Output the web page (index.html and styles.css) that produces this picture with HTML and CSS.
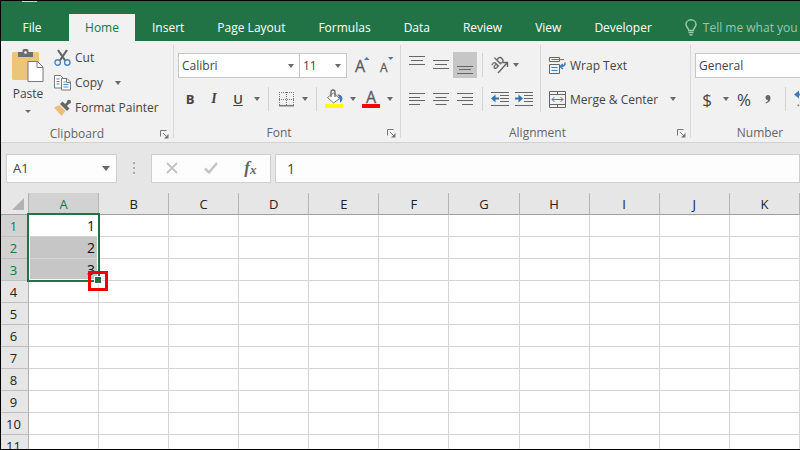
FILE: index.html
```html
<!DOCTYPE html>
<html lang="en">
<head>
<meta charset="utf-8">
<title>Spreadsheet</title>
<link rel="stylesheet" href="styles.css">
</head>
<body>
<div class="app">
  <header class="titlebar">
    <nav class="tabs">
      <button class="tab tab-file">File</button>
      <button class="tab tab-active">Home</button>
      <button class="tab">Insert</button>
      <button class="tab">Page Layout</button>
      <button class="tab">Formulas</button>
      <button class="tab">Data</button>
      <button class="tab">Review</button>
      <button class="tab">View</button>
      <button class="tab">Developer</button>
      <button class="tab tell-me">
        <svg width="12" height="17" viewBox="0 0 12 17" fill="none" stroke="#9cc5ad" stroke-width="1.5"><path d="M3.7 11.5C3.7 9 1 8.500 1 5.500a5 4.700 0 0 1 10 0C11 8.500 8.300 9 8.300 11.500z"/><path d="M3.500 13.500h5M4.500 15.700h3"/></svg>
        <span>Tell me what you want to do</span>
      </button>
    </nav>
  </header>

  <div class="ribbon">
    <section class="group group-clipboard">
      <div class="clip-body">
        <button class="paste">
          <svg width="32" height="34" viewBox="0 0 32 34"><path d="M0 4.500Q0 3 1.500 3H25.500Q27 3 27 4.500V31H1.500Q0 31 0 29.500z" fill="#ecc578"/><path d="M6 8V3h4.500V1.500Q10.500 0 12 0h3q1.500 0 1.500 1.500V3H21v5z" fill="#6d6d6d"/><circle cx="13.500" cy="3.500" r="1.300" fill="#fff"/><path d="M16 12.500h9.500l5.500 5.500v14.500H16z" fill="#fff" stroke="#777"/><path d="M25 12.500v6h6" fill="none" stroke="#777"/></svg>
          <span>Paste</span>
          <svg class="arrow" width="6" height="3" viewBox="0 0 6 3"><path d="M0 0h6L3 3z"/></svg>
        </button>
        <div class="clip-list">
          <button class="cmd">
            <svg width="17" height="18" viewBox="0 0 17 18" fill="none"><path d="M4 1l7.500 11M13 1L5.500 12" stroke="#666" stroke-width="2.200"/><circle cx="3.700" cy="13.500" r="2.700" stroke="#4c87c0" stroke-width="1.400"/><circle cx="13.300" cy="13.500" r="2.700" stroke="#4c87c0" stroke-width="1.400"/></svg>
            <span>Cut</span>
          </button>
          <button class="cmd">
            <svg width="17" height="18" viewBox="0 0 17 18" fill="#fff" stroke="#777"><path d="M.5 1.500h6l3 3V14H.5z"/><path d="M2.500 5h3M2.500 7.500h3M2.500 10h3" stroke="#4c87c0"/><path d="M7.500 4.500h5.500l3.500 3.500v8h-9z"/><path d="M12.500 4.500V8.500h4" fill="none"/><path d="M9.500 8h2M9.500 10.500h5M9.500 13h5" stroke="#4c87c0"/></svg>
            <span>Copy</span>
            <svg class="arrow arrow-copy" width="6" height="4" viewBox="0 0 6 4"><path d="M0 0h6L3 4z"/></svg>
          </button>
          <button class="cmd">
            <svg width="17" height="18" viewBox="0 0 17 18"><path d="M0 8.500l5.500-2.500 6 6L7.500 17z" fill="#ecbd7b"/><path d="M6 5l2.500-2.500 7 7L13 12z" fill="#666"/><path d="M11.500 6.500l4-4" stroke="#666" stroke-width="2.500"/><circle cx="15" cy="2.800" r="2" fill="#666"/></svg>
            <span>Format Painter</span>
          </button>
        </div>
      </div>
      <footer class="group-label">Clipboard
        <button class="launcher" aria-label="Clipboard settings"><svg width="9" height="9" viewBox="0 0 9 9" fill="none" stroke="#777"><path d="M.5 6.500v-6h6M3 3l4 4"/><path d="M8.500 4v4.500H4z" fill="#777" stroke="none"/></svg></button>
      </footer>
    </section>

    <section class="group group-font">
      <div class="rows">
        <div class="row row-top">
          <div class="combo combo-name">
            <select aria-label="Font"><option>Calibri</option></select>
            <svg class="arrow" width="6" height="4" viewBox="0 0 6 4"><path d="M0 0h6L3 4z"/></svg>
          </div>
          <div class="combo combo-size">
            <select aria-label="Font size"><option>11</option></select>
            <svg class="arrow" width="6" height="4" viewBox="0 0 6 4"><path d="M0 0h6L3 4z"/></svg>
          </div>
          <button class="tool grow" aria-label="Increase font size"><svg width="16" height="18" viewBox="0 0 16 18"><text class="glyph" x="0" y="16" font-size="16">A</text><path d="M9 4h5.500L11.700 1z" fill="#3f7cba"/></svg></button>
          <button class="tool" aria-label="Decrease font size"><svg width="16" height="18" viewBox="0 0 16 18"><text class="glyph" x="1" y="16" font-size="12">A</text><path d="M9 1h5.500L11.700 4z" fill="#3f7cba"/></svg></button>
        </div>
        <div class="row">
          <button class="tool bold">B</button>
          <button class="tool italic">I</button>
          <button class="tool underline">U</button>
          <button class="drop" aria-label="Underline style"><svg class="arrow" width="6" height="4" viewBox="0 0 6 4"><path d="M0 0h6L3 4z"/></svg></button>
          <i class="sep"></i>
          <button class="tool" aria-label="Borders"><svg width="15" height="15" viewBox="0 0 15 15" fill="none" stroke="#777"><path d="M0 .5h15M.5 0v13M14.500 0v13M0 7.500h15M7.500 0v13" stroke-dasharray="1 1"/><path d="M0 13.700h15" stroke-width="1.500"/></svg></button>
          <button class="drop" aria-label="Border style"><svg class="arrow" width="6" height="4" viewBox="0 0 6 4"><path d="M0 0h6L3 4z"/></svg></button>
          <i class="sep"></i>
          <button class="tool" aria-label="Fill color"><svg width="18" height="18" viewBox="0 0 18 18"><path d="M2.500 7.500L8.500 3l6 5.500-6 4.500z" fill="#fff" stroke="#777"/><path d="M6 7V2q0-2 2-2t2 2v5" fill="none" stroke="#666" stroke-width="1.300"/><path d="M12 4.500q5-.5 5.500 4 0 3-2.500 4.500.5-5-3-8.500z" fill="#3f7cba"/><path d="M0 14h18v4H0z" fill="#ff0"/></svg></button>
          <button class="drop" aria-label="Fill colors"><svg class="arrow" width="6" height="4" viewBox="0 0 6 4"><path d="M0 0h6L3 4z"/></svg></button>
          <button class="tool" aria-label="Font color"><svg width="18" height="18" viewBox="0 0 18 18"><text class="glyph" x="4" y="13" font-size="16">A</text><path d="M0 14h18v4H0z" fill="#f00"/></svg></button>
          <button class="drop" aria-label="Font colors"><svg class="arrow" width="6" height="4" viewBox="0 0 6 4"><path d="M0 0h6L3 4z"/></svg></button>
        </div>
      </div>
      <footer class="group-label">Font
        <button class="launcher" aria-label="Font settings"><svg width="9" height="9" viewBox="0 0 9 9" fill="none" stroke="#777"><path d="M.5 6.500v-6h6M3 3l4 4"/><path d="M8.500 4v4.500H4z" fill="#777" stroke="none"/></svg></button>
      </footer>
    </section>

    <section class="group group-align">
      <div class="align-body">
        <div class="rows">
          <div class="row row-top">
            <button class="tool" aria-label="Top align"><svg width="16" height="18" viewBox="0 0 16 18" stroke="#666"><path d="M0 .5h16M2 4.500h12M0 8.500h16"/></svg></button>
            <button class="tool" aria-label="Middle align"><svg width="16" height="18" viewBox="0 0 16 18" stroke="#666"><path d="M0 4.500h16M2 8.500h12M0 12.500h16"/></svg></button>
            <button class="tool pressed" aria-label="Bottom align"><svg width="16" height="18" viewBox="0 0 16 18" stroke="#666"><path d="M0 10.500h16M2 13.500h12M0 17.500h16"/></svg></button>
            <i class="sep"></i>
            <button class="tool" aria-label="Orientation"><svg width="20" height="18" viewBox="0 0 20 18"><text class="glyph" x="0" y="0" font-size="12" transform="translate(5 14) rotate(-45)">ab</text><path d="M8 17L17 7M12.500 6.500H17.500V11" fill="none" stroke="#666" stroke-width="1.400"/></svg></button>
            <button class="drop drop-near" aria-label="Orientation options"><svg class="arrow" width="6" height="4" viewBox="0 0 6 4"><path d="M0 0h6L3 4z"/></svg></button>
          </div>
          <div class="row">
            <button class="tool" aria-label="Align left"><svg width="16" height="12" viewBox="0 0 16 12" stroke="#666"><path d="M0 .5h16M0 4.500h11M0 7.500h16M0 11.500h11"/></svg></button>
            <button class="tool" aria-label="Center"><svg width="16" height="12" viewBox="0 0 16 12" stroke="#666"><path d="M0 .5h16M2.500 4.500h11M0 7.500h16M2.500 11.500h11"/></svg></button>
            <button class="tool" aria-label="Align right"><svg width="16" height="12" viewBox="0 0 16 12" stroke="#666"><path d="M0 .5h16M5 4.500h11M0 7.500h16M5 11.500h11"/></svg></button>
            <i class="sep"></i>
            <button class="tool" aria-label="Decrease indent"><svg width="18" height="16" viewBox="0 0 18 16" stroke="#666"><path d="M0 1.500h18M9 4.500h9M9 7.500h9M9 10.500h9M0 14.500h18"/><path d="M2 7.500h6" stroke="#2f73b8" stroke-width="2"/><path d="M4.500 3.500v8L0 7.500z" fill="#2f73b8" stroke="none"/></svg></button>
            <button class="tool" aria-label="Increase indent"><svg width="18" height="16" viewBox="0 0 18 16" stroke="#666"><path d="M0 1.500h18M9 4.500h9M9 7.500h9M9 10.500h9M0 14.500h18"/><path d="M0 7.500h6" stroke="#2f73b8" stroke-width="2"/><path d="M3.500 3.500v8L8 7.500z" fill="#2f73b8" stroke="none"/></svg></button>
          </div>
        </div>
        <div class="rows rows-wrap">
          <button class="cmd cmd-wide">
            <svg width="17" height="17" viewBox="0 0 17 17" fill="none" stroke="#666"><path d="M.5 .5h10v4H.5zM.5 7.500h10v9H.5z"/><path d="M2.500 2.500H15M2.500 10.500h6M2.500 13.500h6" stroke="#3f7cba"/><path d="M16 5.500q.5 4-4.500 4M14 7l-3 2.500 3 2.500" stroke="#3f7cba" stroke-width="1.500"/></svg>
            <span>Wrap Text</span>
          </button>
          <button class="cmd cmd-wide">
            <svg width="17" height="17" viewBox="0 0 17 17" fill="none" stroke="#666"><path d="M.5 .5h16v16H.5zM.5 3.500h16M.5 13.500h16M8.500 .5v3M8.500 13.500v3"/><path d="M3 8.500h11M5.500 6L3 8.500 5.500 11M11.500 6L14 8.500 11.500 11" stroke="#3f7cba"/></svg>
            <span>Merge &amp; Center</span>
            <svg class="arrow arrow-merge" width="6" height="4" viewBox="0 0 6 4"><path d="M0 0h6L3 4z"/></svg>
          </button>
        </div>
      </div>
      <footer class="group-label">Alignment
        <button class="launcher" aria-label="Alignment settings"><svg width="9" height="9" viewBox="0 0 9 9" fill="none" stroke="#777"><path d="M.5 6.500v-6h6M3 3l4 4"/><path d="M8.500 4v4.500H4z" fill="#777" stroke="none"/></svg></button>
      </footer>
    </section>

    <section class="group group-number">
      <div class="rows">
        <div class="row row-top">
          <div class="combo combo-format"><select aria-label="Number format"><option>General</option></select></div>
        </div>
        <div class="row">
          <button class="tool symbol">$</button>
          <button class="drop" aria-label="Currency options"><svg class="arrow" width="6" height="4" viewBox="0 0 6 4"><path d="M0 0h6L3 4z"/></svg></button>
          <button class="tool symbol">%</button>
          <button class="tool" aria-label="Comma style"><svg width="6" height="9" viewBox="0 0 6 9"><path d="M3 0Q5.500 0 5.500 3 5.500 7 1 8.500L.5 7.500Q3 6.500 3 5 .5 5 .5 2.500 .5 0 3 0z" fill="#666"/></svg></button>
          <i class="sep"></i>
          <button class="tool decimal" aria-label="Increase decimal"><svg width="18" height="18" viewBox="0 0 18 18"><path d="M5 .5v8L0 4.500zM4 3.500h5v2H4z" fill="#3f7cba"/><text class="glyph" x="3" y="16" font-size="10">.00</text></svg></button>
        </div>
      </div>
      <footer class="group-label">Number</footer>
    </section>
  </div>

  <div class="formula-bar">
    <div class="namebox">
      <input aria-label="Name box" value="A1">
      <svg class="arrow" width="8" height="5" viewBox="0 0 8 5"><path d="M0 0h8L4 5z"/></svg>
    </div>
    <svg class="grip" width="2" height="12" viewBox="0 0 2 12" fill="#aaa"><path d="M0 0h2v2H0zM0 5h2v2H0zM0 10h2v2H0z"/></svg>
    <div class="entry">
      <button aria-label="Cancel"><svg width="12" height="12" viewBox="0 0 12 12" stroke="#c4c4c4" stroke-width="2"><path d="M1 1l10 10M11 1L1 11"/></svg></button>
      <button aria-label="Enter"><svg width="14" height="12" viewBox="0 0 14 12" fill="none" stroke="#c4c4c4" stroke-width="2.500"><path d="M1 6.500l4 4L13 1"/></svg></button>
      <button class="fx" aria-label="Insert function">f<small>x</small></button>
    </div>
    <input class="formula" aria-label="Formula" value="1">
  </div>

  <table class="sheet">
    <thead>
      <tr><th class="corner"><svg width="12" height="12" viewBox="0 0 12 12"><path d="M12 0v12H0z" fill="#b2b2b2"/></svg></th><th class="sel">A</th><th>B</th><th>C</th><th>D</th><th>E</th><th>F</th><th>G</th><th>H</th><th>I</th><th>J</th><th>K</th></tr>
    </thead>
    <tbody>
      <tr><th class="sel">1</th><td class="origin">1<div class="selection"><i class="handle"></i><i class="marker"></i></div></td><td></td><td></td><td></td><td></td><td></td><td></td><td></td><td></td><td></td><td></td></tr>
      <tr><th class="sel">2</th><td class="filled">2</td><td></td><td></td><td></td><td></td><td></td><td></td><td></td><td></td><td></td><td></td></tr>
      <tr><th class="sel">3</th><td class="filled">3</td><td></td><td></td><td></td><td></td><td></td><td></td><td></td><td></td><td></td><td></td></tr>
      <tr><th>4</th><td></td><td></td><td></td><td></td><td></td><td></td><td></td><td></td><td></td><td></td><td></td></tr>
      <tr><th>5</th><td></td><td></td><td></td><td></td><td></td><td></td><td></td><td></td><td></td><td></td><td></td></tr>
      <tr><th>6</th><td></td><td></td><td></td><td></td><td></td><td></td><td></td><td></td><td></td><td></td><td></td></tr>
      <tr><th>7</th><td></td><td></td><td></td><td></td><td></td><td></td><td></td><td></td><td></td><td></td><td></td></tr>
      <tr><th>8</th><td></td><td></td><td></td><td></td><td></td><td></td><td></td><td></td><td></td><td></td><td></td></tr>
      <tr><th>9</th><td></td><td></td><td></td><td></td><td></td><td></td><td></td><td></td><td></td><td></td><td></td></tr>
      <tr><th>10</th><td></td><td></td><td></td><td></td><td></td><td></td><td></td><td></td><td></td><td></td><td></td></tr>
      <tr><th>11</th><td></td><td></td><td></td><td></td><td></td><td></td><td></td><td></td><td></td><td></td><td></td></tr>
    </tbody>
  </table>
</div>
</body>
</html>
```
FILE: styles.css
```css
* { box-sizing: border-box; }

body {
  margin: 0;
  font-family: "Open Sans", "Noto Sans", sans-serif;
  font-size: 12px;
  color: #444;
  background: #e6e6e6;
}

button, input, select {
  font: inherit;
  color: inherit;
  border: 0;
  padding: 0;
  margin: 0;
  background: none;
  outline: 0;
  border-radius: 0;
}

svg { display: block; flex: none; overflow: visible; }
.arrow { fill: #6a6a6a; }
.glyph { fill: #5c5c5c; stroke: #5c5c5c; stroke-width: 0.3px; font-family: "Open Sans", sans-serif; }

.app {
  height: 100vh;
  overflow: hidden;
  border: 1px solid #000;
  border-right: 0;
}

/* Tabs */
.titlebar {
  position: relative;
  background: #217346;
  padding-top: 13px;
  overflow: hidden;
}
/* Lower edge of the save icon in the quick access bar */
.titlebar::before {
  content: "";
  position: absolute;
  left: 21px;
  top: 0;
  width: 15px;
  height: 1px;
  background: #c5dacd;
}
.tabs { display: flex; }
.tab {
  flex: none;
  height: 27px;
  padding: 0 16px 0 17px;
  color: #fff;
  white-space: nowrap;
}
.tab-file { width: 68px; padding: 0 6px 0 0; }
.tab-active { width: 66px; padding: 0; background: #f1f1f1; color: #217346; }
.tell-me { display: flex; align-items: center; gap: 6px; color: #9cc5ad; }

/* Ribbon */
.ribbon {
  display: flex;
  height: 102px;
  background: #f1f1f1;
  border-bottom: 1px solid #d2d2d2;
  overflow: hidden;
}
.group {
  display: flex;
  flex-direction: column;
  flex: none;
  margin: 4px 0;
  border-right: 1px solid #d8d8d8;
}
.group-clipboard { width: 173px; }
.group-font { width: 227px; padding-left: 4px; }
.group-align { width: 290px; padding-left: 4px; }
.group-number { flex: 1 0 130px; padding-left: 4px; border: 0; }
.group-label {
  position: relative;
  margin-top: auto;
  height: 18px;
  line-height: 25px;
  padding-right: 20px;
  text-align: center;
  color: #666;
}
.group-number .group-label { padding-right: 0; }
.launcher { position: absolute; right: 4px; bottom: 0; }

.clip-body { display: flex; padding-left: 11px; }
.paste {
  display: flex;
  flex-direction: column;
  align-items: center;
  width: 32px;
  height: 72px;
  margin: 4px 10px 0 0;
}
.paste span { line-height: 16px; margin: 3px 0 8px; }
.cmd {
  display: flex;
  align-items: center;
  gap: 4px;
  height: 25px;
  white-space: nowrap;
}
.cmd-wide { height: 26px; }
.arrow-copy { margin-left: 8px; }
.arrow-merge { margin-left: 8px; }

.rows { display: flex; flex-direction: column; gap: 8px; padding-top: 7px; }
.row { display: flex; align-items: center; height: 26px; }
.align-body { display: flex; }
.rows-wrap { margin-left: 4px; padding-left: 8px; border-left: 1px solid #d8d8d8; }

.tool {
  display: flex;
  align-items: center;
  justify-content: center;
  width: 24px;
  height: 26px;
  flex: none;
}
.drop { display: flex; align-items: center; justify-content: center; width: 13px; height: 26px; flex: none; }
.drop-near { width: 8px; }
.sep { width: 1px; height: 24px; margin: 0 5px; background: #d2d2d2; flex: none; }
.pressed { background: #c6c6c6; }
.bold { font-weight: 700; font-size: 13px; }
.italic { font: italic 700 14px "Liberation Serif", serif; }
.underline { font-weight: 600; font-size: 13px; text-decoration: underline; }
.grow { margin-left: 4px; }
.symbol { font-size: 17px; }

.combo {
  position: relative;
  height: 25px;
  background: #fff;
  border: 1px solid #c6c6c6;
}
.combo select {
  appearance: none;
  width: 100%;
  height: 100%;
  padding-left: 3px;
}
.combo .arrow { position: absolute; right: 5px; top: 10px; pointer-events: none; }
.combo-name { width: 122px; }
.combo-size { width: 47px; border-left: 0; }
.combo-format { width: 130px; }

/* Formula bar */
.formula-bar {
  display: flex;
  align-items: center;
  height: 50px;
  padding: 0 0 0 5px;
  background: #e6e6e6;
}
.namebox, .entry, .formula {
  height: 29px;
  background: #fdfdfd;
  border: 1px solid #cfcfcf;
}
.namebox { display: flex; align-items: center; width: 111px; padding: 0 6px; font-size: 13px; }
.namebox input { flex: 1; min-width: 0; }
.grip { margin: 0 16px; }
.entry { display: flex; width: 120px; }
.entry button { flex: 1; display: flex; align-items: center; justify-content: center; }
.entry .fx { font: italic 700 17px "Liberation Serif", serif; color: #666; }
.fx small { font-size: 13px; padding-top: 4px; }
.formula { flex: 1; min-width: 0; margin-left: 4px; padding-left: 11px; font-size: 14px; }

/* Grid */
.sheet {
  width: 100%;
  table-layout: fixed;
  border-collapse: separate;
  border-spacing: 0;
  background: #fff;
  font-size: 13px;
  line-height: 18px;
  color: #222;
}
.sheet th, .sheet td {
  height: 22px;
  padding: 0;
  border-right: 1px solid #d4d4d4;
  border-bottom: 1px solid #d4d4d4;
}
.sheet th { background: #e6e6e6; font-weight: 400; }
.sheet thead th {
  height: 22px;
  border-right-color: #b5b5b5;
  border-bottom-color: #a0a0a0;
}
.sheet tbody th { padding-right: 2px; border-right-color: #b0b0b0; border-bottom-color: #bdbdbd; }
.sheet .corner { width: 28px; border-right-color: #b0b0b0; }
.corner svg { margin-left: 11px; }
.sheet .sel { background: #d2d2d2; color: #217346; }
.sheet td { text-align: right; padding-right: 3px; font-size: 14px; color: #111; }
.sheet .filled { background: #c6c6c6; }
.sheet .origin { position: relative; }

.selection {
  position: absolute;
  inset: -2px -2px auto -2px;
  height: 69px;
  border: 2px solid #217346;
  box-shadow: inset 0 0 0 1px #fff;
}
.handle {
  position: absolute;
  right: -4px;
  bottom: -4px;
  width: 8px;
  height: 8px;
  background: #217346;
  border: 1px solid #fff;
}
.marker {
  position: absolute;
  right: -10px;
  bottom: -11px;
  width: 20px;
  height: 20px;
  border: 3px solid #f00000;
}
```
